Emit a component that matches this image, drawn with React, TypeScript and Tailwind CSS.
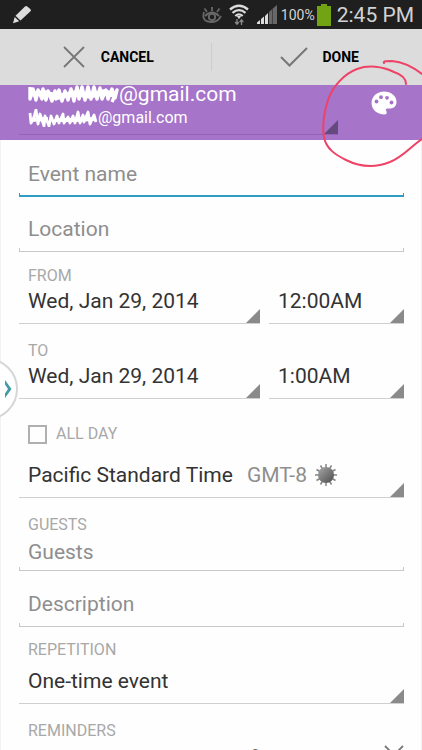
import type { ReactNode } from "react";

function StatusBar() {
  return (
    <div className="flex h-[29px] shrink-0 items-center bg-[#1f1f1f] pr-2 pl-3 text-[#d2d2d2]">
      <svg viewBox="0 0 20 19" className="h-[19px] w-5" fill="#dcdcdc">
        <path d="M13 1.500 Q14 0.500 15.300 1.500 L18.500 4.200 Q19.500 5.200 18.500 6.200 L8.500 15.600 L3.500 10.800 Z" />
        <path d="M2.700 12 L7.200 16.300 L1 18.200 Z" />
      </svg>
      <div className="ml-auto flex items-center">
        {/* smart stay */}
        <svg viewBox="0 0 22 20" className="h-5 w-[22px]" fill="none" stroke="#686868" strokeWidth="1.800">
          <path d="M3 7 Q0 17 11 17 Q17 17 20 11" />
          <path d="M4 11 Q11 4 18 11" />
          <circle cx="11" cy="12" r="3.200" />
          <path d="M11 6 V2 M6 7 L3.500 3.500 M16 7 L18.500 3.500" />
        </svg>
        {/* wifi */}
        <svg viewBox="0 0 20 22" className="ml-1.5 h-[22px] w-5" fill="none" stroke="#dcdcdc" strokeWidth="2.300">
          <path d="M1 5.500 Q10 -2 19 5.500" />
          <path d="M3.500 8.800 Q10 3.500 16.500 8.800" />
          <path d="M6.300 12 Q10 8.800 13.700 12" />
          <path d="M8.500 12.500 L10 14.500 L11.500 12.500 Z" fill="#dcdcdc" strokeWidth="1" />
          <path d="M8 15 V20 M6.200 18 L8 20.300 L9.800 18 M12.500 21 V16 M10.700 18 L12.500 15.700 L14.300 18" stroke="#8a8a8a" strokeWidth="1.300" />
        </svg>
        {/* signal */}
        <svg viewBox="0 0 20 20" className="ml-2 h-5 w-5">
          <path d="M0 19 V17.500 L3 15 V19 Z M4 19 V14 L7 11.500 V19 Z M8 19 V11 L11 8 V19 Z" fill="#dcdcdc" />
          <path d="M12 19 V7 L15 4.300 V19 Z M15.500 19 V3.800 L20 0 V19 Z" fill="#686868" />
        </svg>
        <span className="ml-1 text-[14px] leading-5">100%</span>
        <svg viewBox="0 0 14 22" className="ml-0.5 h-[22px] w-[14px]" fill="#72a313">
          <path d="M4 0 H10 V2 H14 V22 H0 V2 H4 Z" />
        </svg>
        <span className="ml-1.5 text-[21px] leading-7">2:45 PM</span>
      </div>
    </div>
  );
}

function ActionBar() {
  return (
    <div className="flex h-14 shrink-0 items-center bg-[#dcdcdc] text-[14px] font-bold text-black">
      <button type="button" className="flex h-full flex-1 items-center justify-center gap-4 pl-1.5">
        <svg viewBox="0 0 22 22" className="h-[22px] w-[22px]" stroke="#777" strokeWidth="1.800">
          <path d="M1 1 L21 21 M21 1 L1 21" />
        </svg>
        CANCEL
      </button>
      <div className="h-7 w-px bg-[#cdcdcd]" />
      <button type="button" className="flex h-full flex-1 items-center justify-center gap-3.5 pl-1.5">
        <svg viewBox="0 0 28 20" className="h-5 w-7" fill="none" stroke="#777" strokeWidth="2">
          <path d="M1 10 L9.500 18.500 L27 1" />
        </svg>
        DONE
      </button>
    </div>
  );
}

function Corner({ className }: { className: string }) {
  return (
    <svg
      viewBox="0 0 14 14"
      className={`pointer-events-none absolute right-0 bottom-0 h-3.5 w-3.5 ${className}`}
      fill="currentColor"
    >
      <path d="M14 0 V14 H0 Z" />
    </svg>
  );
}

function PaletteIcon() {
  return (
    <svg viewBox="0 0 26 24" className="h-6 w-[26px]">
      <path
        d="M13 0.500 C20 0.500 25.500 5 25.500 11 C25.500 15.500 22.500 17.500 18.500 17.500 H16.500 C14.800 17.500 14.500 18.800 15.300 20 C16.300 21.800 15.500 23.500 13.500 23.500 C6 23.500 0.500 18.500 0.500 12 C0.500 5.500 6 0.500 13 0.500 Z"
        fill="#fff"
      />
      <g fill="#a674c9">
        <circle cx="5.500" cy="10.500" r="1.900" />
        <circle cx="10" cy="6.200" r="1.900" />
        <circle cx="16" cy="6.800" r="1.900" />
        <circle cx="20.500" cy="11.500" r="1.900" />
      </g>
    </svg>
  );
}

function AccountHeader() {
  return (
    <div className="flex shrink-0 items-start justify-between bg-[#a674c9] pr-[22px] pb-[5px] pl-[19px] text-white">
      <button
        type="button"
        aria-label="Calendar account"
        aria-haspopup="listbox"
        className="relative flex h-[50px] w-[319px] max-w-full flex-col justify-start border-b border-[#9564b8] pl-[9px] text-left"
      >
        <span className="flex items-center text-[21px] leading-[18px]">
          <svg viewBox="0 0 91 18" className="h-[18px] w-[91px]" fill="none" stroke="#fff" strokeWidth="3.400" strokeLinejoin="round">
            <path d="M2 2 L2 14 L5 4 L8 15 L10 5 L14 14 L15 4 L18 15 L20 6 L24 16 L27 6 L28 14 L31 5 L34 16 L37 6 L40 15 L43 4 L46 16 L49 2 L51 14 L54 2 L57 15 L60 2 L63 14 L66 2 L69 14 L72 3 L74 14 L78 5 L80 14 L84 4 L87 13 L89 5 L84 17" />
            <path d="M2 9 L17 8 L30 12 L47 8 L62 11 L76 7 L87 10" strokeWidth="5.500" />
          </svg>
          @gmail.com
        </span>
        <span className="mt-[3px] flex items-center text-[16px] leading-6">
          <svg viewBox="0 0 70 18" className="h-[18px] w-[70px]" fill="none" stroke="#fff" strokeWidth="2.800" strokeLinejoin="round">
            <path d="M2 4 L3 14 L6 8 L8 1 L10 15 L12 5 L16 17 L17 7 L21 17 L23 7 L26 15 L29 7 L31 14 L35 5 L36 14 L40 8 L42 14 L45 7 L47 14 L50 3 L52 14 L55 6 L56 13 L60 3 L62 15 L66 6 L68 13" />
            <path d="M3 11 L20 10 M27 11 L46 11 L66 10" strokeWidth="4" />
          </svg>
          @gmail.com
        </span>
        <Corner className="text-[#654a80]" />
      </button>
      <button type="button" aria-label="Event color" className="flex h-9 w-8 items-center justify-center">
        <PaletteIcon />
      </button>
    </div>
  );
}

type TextFieldProps = {
  label: string;
  inputClass?: string;
  lineClass?: string;
};

function TextField({
  label,
  inputClass = "h-10",
  lineClass = "border-[#c8c8c8] border-b",
}: TextFieldProps) {
  return (
    <div>
      <input
        type="text"
        aria-label={label}
        placeholder={label}
        className={`block w-full bg-transparent px-[9px] pt-0.5 text-[21px] text-[#333] outline-none placeholder:text-[#8e8e8e] ${inputClass}`}
      />
      <div className={`h-1 border-x ${lineClass}`} />
    </div>
  );
}

type SpinnerProps = {
  label: string;
  value: string;
  selectClass?: string;
  children?: ReactNode;
};

function Spinner({ label, value, selectClass = "w-full", children }: SpinnerProps) {
  return (
    <div className="relative flex h-[38px] items-center border-b border-[#d0d0d0] px-[9px] pb-2">
      <select
        aria-label={label}
        defaultValue={value}
        className={`appearance-none bg-transparent text-[21px] leading-7 text-[#333] outline-none ${selectClass}`}
      >
        <option>{value}</option>
      </select>
      {children}
      <Corner className="text-[#8a8a8a]" />
    </div>
  );
}

function SectionLabel({ children }: { children: ReactNode }) {
  return <h2 className="px-[9px] text-[16px] leading-5 text-[#a8a8a8]">{children}</h2>;
}

function DateRow({ label, date, time }: { label: string; date: string; time: string }) {
  return (
    <section>
      <SectionLabel>{label}</SectionLabel>
      <div className="grid grid-cols-[25fr_14fr] gap-[9px]">
        <Spinner label={`${label} date`} value={date} />
        <Spinner label={`${label} time`} value={time} />
      </div>
    </section>
  );
}

function SunIcon() {
  return (
    <svg viewBox="0 0 22 22" className="ml-2 h-[22px] w-[22px]">
      <defs>
        <linearGradient id="sun" x1="0" y1="0" x2="1" y2="1">
          <stop offset="0" stopColor="#a8a8a8" />
          <stop offset="1" stopColor="#4c4c4c" />
        </linearGradient>
      </defs>
      <path
        d="M11 0 V22 M0 11 H22 M5.500 1.500 L16.500 20.500 M16.500 1.500 L5.500 20.500 M1.500 5.500 L20.500 16.500 M1.500 16.500 L20.500 5.500"
        stroke="#858585"
        strokeWidth="1.500"
      />
      <circle cx="11" cy="11" r="8" fill="url(#sun)" />
    </svg>
  );
}

export default function App() {
  return (
    <div className="relative flex h-screen flex-col overflow-hidden bg-[#fefefe] font-['Roboto',sans-serif]">
      <StatusBar />
      <ActionBar />
      <AccountHeader />

      <main className="min-h-0 flex-1 overflow-hidden border-x border-[#f2f2f2] pt-[13px] pr-[17px] pl-[18px]">
        <TextField label="Event name" lineClass="border-[#2f9cc4] border-b-2" />
        <div className="mt-[11px]">
          <TextField label="Location" />
        </div>
        <div className="mt-3.5">
          <DateRow label="FROM" date="Wed, Jan 29, 2014" time="12:00AM" />
        </div>
        <div className="mt-[17px]">
          <DateRow label="TO" date="Wed, Jan 29, 2014" time="1:00AM" />
        </div>

        <label className="mt-[25px] flex h-5 items-center gap-[9px] px-[9px] text-[16px] text-[#a8a8a8]">
          <input
            type="checkbox"
            className="h-[19px] w-[19px] appearance-none border-2 border-[#b0b0b0] checked:bg-[#2f9cc4]"
          />
          ALL DAY
        </label>

        <div className="mt-4">
          <Spinner label="Time zone" value="Pacific Standard Time" selectClass="field-sizing-content">
            <span className="ml-3.5 text-[21px] leading-7 text-[#8e8e8e]">GMT-8</span>
            <SunIcon />
          </Spinner>
        </div>

        <section className="mt-[17px]">
          <SectionLabel>GUESTS</SectionLabel>
          <TextField label="Guests" inputClass="h-8" />
        </section>
        <div className="mt-3">
          <TextField label="Description" />
        </div>

        <section className="mt-[13px]">
          <SectionLabel>REPETITION</SectionLabel>
          <div className="mt-1.5">
            <Spinner label="Repetition" value="One-time event" />
          </div>
        </section>

        <section className="mt-[17px]">
          <SectionLabel>REMINDERS</SectionLabel>
          <div className="mt-0.5 flex">
            <div className="w-[174px]">
              <Spinner label="Reminder time" value="10 minutes" />
            </div>
            <div className="ml-2 flex-1">
              <Spinner label="Reminder type" value="Notification" />
            </div>
            <button type="button" aria-label="Remove reminder" className="mt-0.5 ml-6 h-5 w-5">
              <svg viewBox="0 0 20 20" className="h-5 w-5" stroke="#777" strokeWidth="1.800">
                <path d="M1 1 L19 19 M19 1 L1 19" />
              </svg>
            </button>
          </div>
        </section>
      </main>

      {/* multi-window handle */}
      <button
        type="button"
        aria-label="Open side panel"
        className="absolute top-[358px] -left-11 h-[62px] w-[62px] rounded-full border-2 border-[#d6d6d6] bg-white"
      >
        <svg viewBox="0 0 8 18" className="ml-auto mr-1 h-[18px] w-2" fill="#4499a8">
          <path d="M1 0 L7.500 9 L1 18 V13.500 L4 9 L1 4.500 Z" />
        </svg>
      </button>

      {/* hand-drawn circle round the palette */}
      <svg
        viewBox="0 0 102 110"
        className="pointer-events-none absolute top-[59px] right-0 h-[110px] w-[102px]"
        fill="none"
        stroke="#ee4266"
        strokeWidth="2"
        strokeLinecap="round"
      >
        <path d="M86 25 C86 19 80 15 74 13 C62 7 48 6 37 10 C24 15 13 27 8 41 C4 54 2 67 4 78 C6 90 16 96 26 101 C40 108 55 109 70 103 C84 97 90 88 102 80" />
        <path d="M64 4 C63 2 67 2 72 2 C84 3 93 8 102 15" />
      </svg>
    </div>
  );
}
